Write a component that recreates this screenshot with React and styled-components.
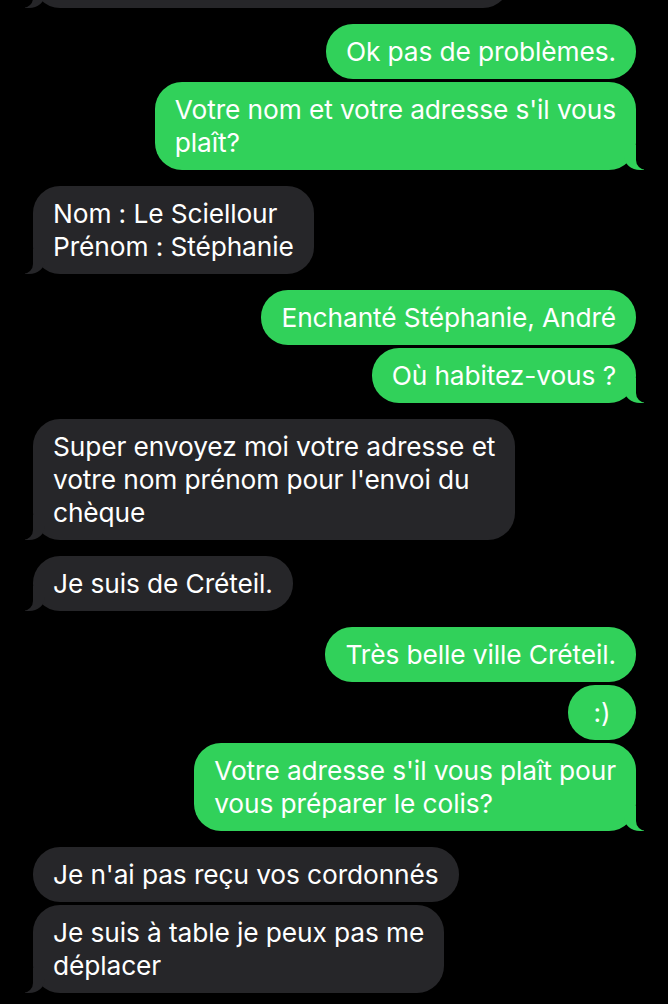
import styled, { createGlobalStyle, css } from "styled-components";

const GlobalStyle = createGlobalStyle`
  html, body {
    margin: 0;
    padding: 0;
    background: #000;
  }
  body {
    font-family: Inter, "Noto Sans", "Liberation Sans", sans-serif;
    -webkit-font-smoothing: antialiased;
  }
`;

const GREEN = "#31d15a";
const GREY = "#262629";

const Screen = styled.div`
  width: 668px;
  height: 1004px;
  overflow: hidden;
  background: #000;
`;

const Thread = styled.div`
  display: flex;
  flex-direction: column;
  gap: 16px;
  padding: 0 32px 0 33px;
  margin-top: -47px;
`;

const Group = styled.div`
  display: flex;
  flex-direction: column;
  gap: 3px;
  align-items: ${({ $me }) => ($me ? "flex-end" : "flex-start")};
`;

const rightTail = css`
  &::before,
  &::after {
    content: "";
    position: absolute;
    bottom: 0;
    height: 25px;
  }
  &::before {
    right: -8px;
    width: 20px;
    background: ${GREEN};
    border-bottom-left-radius: 16px 14px;
  }
  &::after {
    right: -26px;
    width: 26px;
    background: #000;
    border-bottom-left-radius: 10px;
  }
`;

const leftTail = css`
  &::before,
  &::after {
    content: "";
    position: absolute;
    bottom: 0;
    height: 25px;
  }
  &::before {
    left: -8px;
    width: 20px;
    background: ${GREY};
    border-bottom-right-radius: 16px 14px;
  }
  &::after {
    left: -26px;
    width: 26px;
    background: #000;
    border-bottom-right-radius: 10px;
  }
`;

const Bubble = styled.div`
  position: relative;
  box-sizing: border-box;
  min-height: 55px;
  min-width: 68px;
  padding: 11px 20px;
  border-radius: 27px;
  font-size: 26.3px;
  line-height: 33px;
  letter-spacing: -0.1px;
  color: #fff;
  white-space: pre-line;
  background: ${({ $me }) => ($me ? GREEN : GREY)};
  width: ${({ $width }) => ($width ? `${$width}px` : "auto")};
  ${({ $tail, $me }) => $tail && ($me ? rightTail : leftTail)}
`;

const Smiley = styled.span`
  display: block;
  text-align: center;
`;

// first bubble is scrolled off the top, only its bottom edge shows
const conversation = [
  { me: false, lines: [{ text: "", width: 477 }] },
  { me: true, lines: ["Ok pas de problèmes.", "Votre nom et votre adresse s'il vous\nplaît?"] },
  { me: false, lines: ["Nom : Le Sciellour\nPrénom : Stéphanie"] },
  { me: true, lines: ["Enchanté Stéphanie, André", "Où habitez-vous ?"] },
  {
    me: false,
    lines: [
      "Super envoyez moi votre adresse et\nvotre nom prénom pour l'envoi du\nchèque",
    ],
  },
  { me: false, lines: ["Je suis de Créteil."] },
  {
    me: true,
    lines: [
      "Très belle ville Créteil.",
      { text: ":)", short: true },
      "Votre adresse s'il vous plaît pour\nvous préparer le colis?",
    ],
  },
  {
    me: false,
    lines: ["Je n'ai pas reçu vos cordonnés", "Je suis à table je peux pas me\ndéplacer"],
  },
];

export default function App() {
  return (
    <>
      <GlobalStyle />
      <Screen>
        <Thread>
          {conversation.map((group, gi) => (
            <Group key={gi} $me={group.me}>
              {group.lines.map((line, li) => {
                const item = typeof line === "string" ? { text: line } : line;
                return (
                  <Bubble
                    key={li}
                    $me={group.me}
                    $width={item.width}
                    $tail={li === group.lines.length - 1}
                  >
                    {item.short ? <Smiley>{item.text}</Smiley> : item.text}
                  </Bubble>
                );
              })}
            </Group>
          ))}
        </Thread>
      </Screen>
    </>
  );
}
